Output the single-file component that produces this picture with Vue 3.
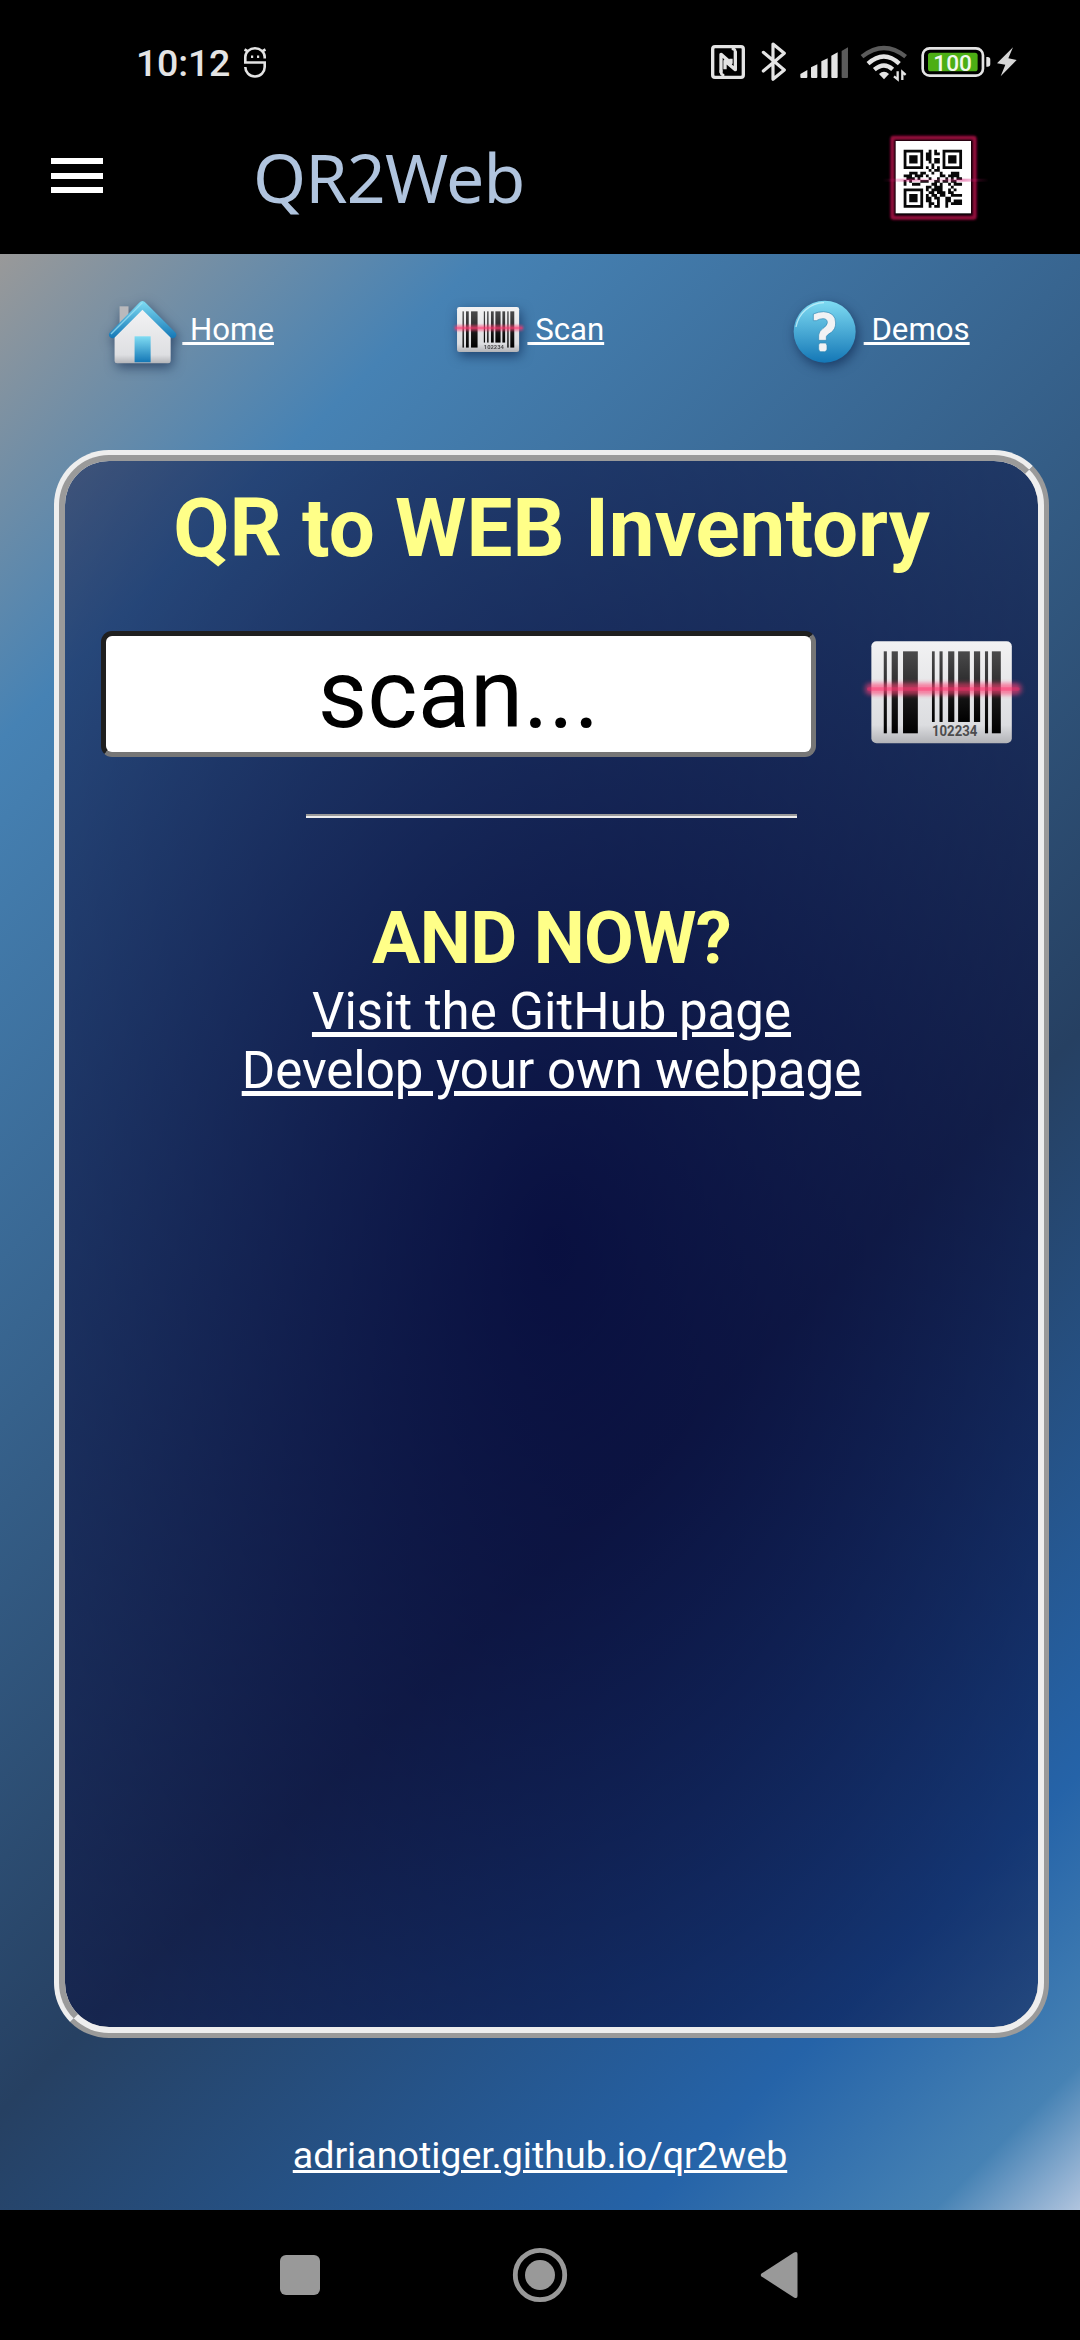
<script setup>
const qrRows = [
  '#######..#.#..#######',
  '#.....#.##.##.#.....#',
  '#.###.#.##....#.###.#',
  '#.###.#.##.##.#.###.#',
  '#.###.#..#.##.#.###.#',
  '#.....#...#...#.....#',
  '#######.#.#.#.#######',
  '.........#.##........',
  '..###.##..#..#...###.',
  '###.###.#....##.####.',
  '.###.#...#..#..#.#.##',
  '#.#...###..##.##.##..',
  '#..###....##.#..#.###',
  '........##.###...#...',
  '#######.#.####..#.#..',
  '#.....#..##.###.##...',
  '#.###.#.#.##.##..####',
  '#.###.#.##.##..##....',
  '#.###.#.##..#..##.###',
  '#.....#..##.#..#.####',
  '#######..#.##..#.....',
]

// One horizontal run of dark modules per subpath
const qrPath = qrRows
  .flatMap((row, y) => [...row.matchAll(/#+/g)].map((m) => `M${m.index} ${y}h${m[0].length}v1h-${m[0].length}z`))
  .join('')

// x, width, height of each bar on the barcode card
const bars = [
  [999, 9, 246], [1022, 18, 246], [1055, 43, 246], [1139, 8, 212], [1161, 9, 212],
  [1186, 18, 212], [1215, 34, 212], [1261, 18, 212], [1293, 9, 246], [1313, 26, 246],
]
</script>

<template>
  <div class="screen">
    <div class="status">
      <span class="time">10:12</span>
      <svg class="s-app" viewBox="0 0 22 31" fill="none" stroke="#e4e4e4" stroke-width="2.6">
        <path d="M1.3 11.5V10a9.7 8.7 0 0 1 19.400 0v1.500M.5 2.500l3.500 2M21.500 2.500l-3.500 2M1.300 11v4.500h19.400v4.500c0 5-4 9.500-9.700 9.500s-9.700-4.500-9.700-9.500" />
        <path d="M7 9.800h2.200M13 9.800h2.200" stroke-width="2.400" />
      </svg>
      <div class="status-icons">
        <svg width="36" viewBox="90 60 108 130" fill="none" stroke="#e4e4e4" stroke-linejoin="round">
          <rect x="98" y="80" width="92" height="92" rx="7" stroke-width="10" />
          <path d="M123 158V103L153 129V116M166 94V149L135 123V148" stroke-width="10" />
          <path d="M123 150V158Q124 166 133 166M166 102V94Q165 86 155 86" stroke-width="8" />
        </svg>
        <svg class="s-bt" width="28.3" viewBox="240 60 85 130" fill="none" stroke="#e4e4e4" stroke-width="9.500" stroke-linejoin="round" stroke-linecap="round">
          <path d="M250 97L313 150L279 178V72L313 100L250 153" />
        </svg>
        <svg class="s-sig" width="50" viewBox="357 60 150 130" fill="#e4e4e4">
          <path d="M361 171V162L382 150V171Q382 174 379 174H364Q361 174 361 171zM393 171V142L412 133V171Q412 174 409 174H396Q393 174 393 171zM424 171V124L443 115V171Q443 174 440 174H427Q424 174 424 171zM454 171V107L473 97V171Q473 174 470 174H457Q454 174 454 171z" />
          <path d="M485 171V93L504 82V171Q504 174 501 174H488Q485 174 485 171z" fill="#5b5b5b" />
        </svg>
        <svg class="s-wifi" width="48" viewBox="540 60 144 130" fill="none" stroke="#e4e4e4" stroke-width="13">
          <path d="M546 110Q612 58 677 110" stroke="#5b5b5b" />
          <path d="M564 131Q612 88 658 131M583 149Q612 124 638 148" />
          <path d="M597 162Q612 149 627 162L612 178Z" fill="#e4e4e4" stroke="none" />
          <path d="M653 154V178L642 169M667 180V156L677 165" stroke-width="7" />
        </svg>
        <svg class="s-bat" width="71.300" viewBox="722 60 214 130">
          <rect x="730" y="85" width="181" height="82" rx="21" fill="none" stroke="#e4e4e4" stroke-width="8" />
          <rect x="746" y="98" width="149" height="56" rx="8" fill="#4cae14" />
          <path d="M921 111h4q8 0 8 8v13q0 8-8 8h-4z" fill="#e4e4e4" />
          <text x="820" y="152" text-anchor="middle" font-size="69" font-weight="500" fill="#f1f8ec" textLength="116" lengthAdjust="spacingAndGlyphs">100</text>
        </svg>
        <svg class="s-bolt" width="21.700" viewBox="950 60 65 130" fill="#d6d6d6">
          <path d="M1001 82L953 130L978 134L964 169L1012 120L987 115Z" />
        </svg>
      </div>
    </div>

    <header class="topbar">
      <div class="burger"><i></i><i></i><i></i></div>
      <h1 class="brand">QR2Web</h1>
      <svg class="qr" viewBox="60 60 330 285">
        <defs>
          <filter id="soft" x="-20%" y="-20%" width="140%" height="140%"><feGaussianBlur stdDeviation="2.500" /></filter>
          <linearGradient id="beam">
            <stop offset="0" stop-color="#d81b78" stop-opacity="0" />
            <stop offset=".25" stop-color="#d81b78" stop-opacity=".7" />
            <stop offset=".5" stop-color="#f06ab0" stop-opacity=".25" />
            <stop offset=".75" stop-color="#d81b78" stop-opacity=".7" />
            <stop offset="1" stop-color="#d81b78" stop-opacity="0" />
          </linearGradient>
        </defs>
        <rect x="97" y="83" width="247" height="240" rx="3" fill="none" stroke="#960a3e" stroke-width="12" filter="url(#soft)" />
        <rect x="107" y="93" width="226" height="217" fill="#fff" />
        <path :d="qrPath" transform="translate(131 119) scale(8.340 8.300)" fill="#080808" />
        <rect x="68" y="206" width="318" height="9" fill="url(#beam)" opacity=".65" />
      </svg>
    </header>

    <main class="page">
      <nav class="menu">
        <a class="item" href="#home">
          <svg class="i-home" viewBox="60 80 215 220" preserveAspectRatio="none">
            <defs>
              <linearGradient id="roof" x2="0" y2="1"><stop offset="0" stop-color="#7fdcf3" /><stop offset="1" stop-color="#1477b6" /></linearGradient>
              <linearGradient id="wall" x2="0" y2="1"><stop offset="0" stop-color="#f4f4f5" /><stop offset=".85" stop-color="#dedfe2" /><stop offset="1" stop-color="#b4b5b9" /></linearGradient>
            </defs>
            <rect x="112" y="108" width="25" height="50" fill="#b9b9bc" />
            <path d="M176 110L255 194V272Q255 279 248 279H105Q98 279 98 272V194Z" fill="url(#wall)" />
            <rect x="154" y="198" width="45" height="78" fill="url(#roof)" />
            <path d="M176 92Q181 92 185 97L269 187Q273 193 269 199Q262 207 254 201L176 118L99 201Q91 207 84 199Q80 193 84 187L167 97Q171 92 176 92Z" fill="url(#roof)" />
            <path d="M88 191L176 97" stroke="#a6e6f6" stroke-width="4" opacity=".7" />
          </svg>
          <span class="label">&nbsp;Home</span>
        </a>
        <a class="item" href="#scan">
          <svg class="i-scan" viewBox="930 620 490 340" preserveAspectRatio="none"><use href="#barcode" /></svg>
          <span class="label">&nbsp;Scan</span>
        </a>
        <a class="item" href="#demos">
          <svg class="i-help" viewBox="150 80 210 210">
            <circle cx="254" cy="184" r="93" fill="url(#roof)" />
            <path d="M168 170A88 86 0 0 1 252 97" fill="none" stroke="#c9f1fa" stroke-width="4" opacity=".8" />
            <path d="M220 131Q236 124 251 124Q287 126 287 158Q287 176 274 186Q260 194 259 199V210H236V194Q237 183 249 174Q262 165 262 157Q262 145 249 145Q239 145 229 151H220ZM240 218H256Q261 220 261 226V237Q260 243 254 244H242Q236 242 236 236V225Q236 219 240 218Z" fill="#f1f2f4" stroke="#2f86b4" stroke-width="2" />
          </svg>
          <span class="label">&nbsp;Demos</span>
        </a>
      </nav>

      <section class="panel">
        <h2 class="title">QR to WEB Inventory</h2>
        <div class="scan-row">
          <input class="field" type="text" value="scan..." />
          <svg class="barcode" viewBox="930 620 490 340" preserveAspectRatio="none">
            <defs>
              <linearGradient id="card" x2="0" y2="1"><stop offset="0" stop-color="#f2f2f3" /><stop offset=".82" stop-color="#dcdde0" /><stop offset="1" stop-color="#b2b3b7" /></linearGradient>
              <linearGradient id="ink" x2="0" y2="1"><stop offset="0" stop-color="#4a4a4b" /><stop offset=".45" stop-color="#2c2c2d" /><stop offset=".5" stop-color="#1c1c1c" /><stop offset="1" stop-color="#000" /></linearGradient>
              <filter id="glow" x="-10%" y="-100%" width="120%" height="300%"><feGaussianBlur stdDeviation="7" /></filter>
              <g id="barcode">
                <rect x="963" y="633" width="408" height="306" rx="15" fill="url(#card)" />
                <rect v-for="b in bars" :key="b[0]" :x="b[0]" y="663" :width="b[1]" :height="b[2]" fill="url(#ink)" />
                <text x="1205" y="918" text-anchor="middle" font-size="42" font-weight="700" fill="#4c4c4e" textLength="132" lengthAdjust="spacingAndGlyphs">102234</text>
                <rect x="945" y="758" width="454" height="36" rx="15" fill="#ff3f74" opacity=".62" filter="url(#glow)" />
                <rect x="950" y="771" width="444" height="10" rx="5" fill="#ff2f6c" opacity=".4" />
              </g>
            </defs>
            <use href="#barcode" />
          </svg>
        </div>
        <div class="rule"></div>
        <h3 class="subtitle">AND NOW?</h3>
        <a class="link" href="#github">Visit the GitHub page</a>
        <a class="link" href="#develop">Develop your own webpage</a>
      </section>

      <a class="foot" href="#site">adrianotiger.github.io/qr2web</a>
    </main>

    <footer class="sysnav">
      <svg width="520" height="56" viewBox="0 0 520 56" fill="#999">
        <rect x="2" y="8" width="40" height="40" rx="6" />
        <circle cx="262" cy="28" r="24.700" fill="none" stroke="#999" stroke-width="4.800" />
        <circle cx="262" cy="28" r="15" />
        <path d="M483.500 26.500Q482 28 483.500 29.500L516 50.500Q519.500 52 519.500 49V7Q519.500 4 516 5.500Z" />
      </svg>
    </footer>
  </div>
</template>

<style>
body { margin: 0; background: #000; }
</style>

<style scoped>
.screen {
  width: 1080px;
  height: 2340px;
  display: flex;
  flex-direction: column;
  background: #000;
  font-family: Roboto, sans-serif;
  overflow: hidden;
}
svg { display: block; flex: none; }
a { color: #fff; text-decoration: none; }

.status {
  height: 124px;
  box-sizing: border-box;
  padding: 0 62px 0 136px;
  display: flex;
  align-items: center;
}
.time { font-size: 37.5px; font-weight: 500; line-height: 44px; color: #e4e4e4; width: 108px; margin-top: 2px; letter-spacing: -.2px; }
.s-app { width: 22px; height: 31px; }
.status-icons { display: flex; align-items: center; margin-left: auto; }
.status-icons svg { height: 43.3px; }
.s-bt { margin-left: 14px; }
.s-sig { margin-left: 10.7px; }
.s-wifi { margin-left: 11px; }
.s-bat { margin-left: 12.7px; }
.s-bolt { margin-left: 4.7px; }

.topbar {
  height: 130px;
  box-sizing: border-box;
  padding: 0 90px 22px 51px;
  display: flex;
  align-items: center;
}
.burger { width: 52px; height: 35px; margin-bottom: 5px; display: flex; flex-direction: column; justify-content: space-between; }
.burger i { height: 6px; background: #fff; }
.brand {
  margin: 0 0 2px 150px;
  font: 400 68px/94px "Noto Sans", sans-serif;
  letter-spacing: -.8px;
  color: #b0c4de;
}
.qr { width: 110px; height: 95px; margin: 0 0 2px auto; }

.page {
  height: 1956px;
  display: flex;
  flex-direction: column;
  background: linear-gradient(135deg, #999 0%, #4682b4 16%, #264062 61.2%, #2563a8 85.6%, #4682b4 95.2%, #b0c4de 100%);
}
.menu {
  height: 80px;
  padding: 36px 0 0 101px;
  display: grid;
  grid-template-columns: 350.8px 338.2px 1fr;
}
.item { display: flex; align-items: center; }
.label {
  font-size: 31.2px;
  line-height: 40px;
  text-decoration: underline;
  text-decoration-thickness: 3px;
  text-underline-offset: 2px;
}
.item svg { filter: drop-shadow(2px 4px 6px rgba(0, 20, 60, .55)); overflow: visible; }
.i-home { width: 76.8px; height: 73.3px; margin: 7px 4.5px 0 0; }
.i-scan { width: 74.6px; height: 50.1px; margin-right: 1px; }
.i-help { width: 70px; height: 70px; margin: 3px 3.7px 0 0; }

.panel {
  width: 995px;
  height: 1588px;
  box-sizing: border-box;
  margin: 80px 0 0 54px;
  border: 11px ridge #eee;
  border-radius: 55px;
  background: radial-gradient(rgba(0, 0, 51, .8), rgba(0, 0, 51, .4));
  display: flex;
  flex-direction: column;
  align-items: center;
  flex: none;
}
.title { margin: 19px 0 0; font-size: 81.7px; line-height: 96px; font-weight: 700; color: #ffff88; }
.scan-row { align-self: flex-start; margin: 55px 0 0 36px; display: flex; align-items: center; gap: 44px; }
.field {
  width: 715px;
  height: 126px;
  box-sizing: border-box;
  padding: 0;
  border: 5px solid;
  border-color: #1f1f1f #767676 #767676 #1f1f1f;
  border-radius: 11px;
  background: #fff;
  color: #000;
  font: 400 96.25px/112px Roboto, sans-serif;
  text-align: center;
  outline: none;
}
.barcode { width: 168.7px; height: 113.3px; overflow: visible; }
.rule { width: 491px; height: 2px; margin-top: 57px; background: #9a9a9a; border-bottom: 2px solid #eee; flex: none; }
.subtitle { margin: 78px 0 0; font-size: 72.3px; line-height: 86px; font-weight: 700; letter-spacing: -.7px; color: #ffff88; }
.link {
  font-size: 51px;
  line-height: 59px;
  text-decoration: underline;
  text-decoration-thickness: 5px;
  text-underline-offset: 3px;
}
.foot {
  align-self: center;
  margin-top: 95px;
  font-size: 37.6px;
  line-height: 44px;
  text-decoration: underline;
  text-decoration-thickness: 3px;
  text-underline-offset: 2px;
}
.sysnav { height: 130px; padding-left: 278px; display: flex; align-items: center; }
</style>
